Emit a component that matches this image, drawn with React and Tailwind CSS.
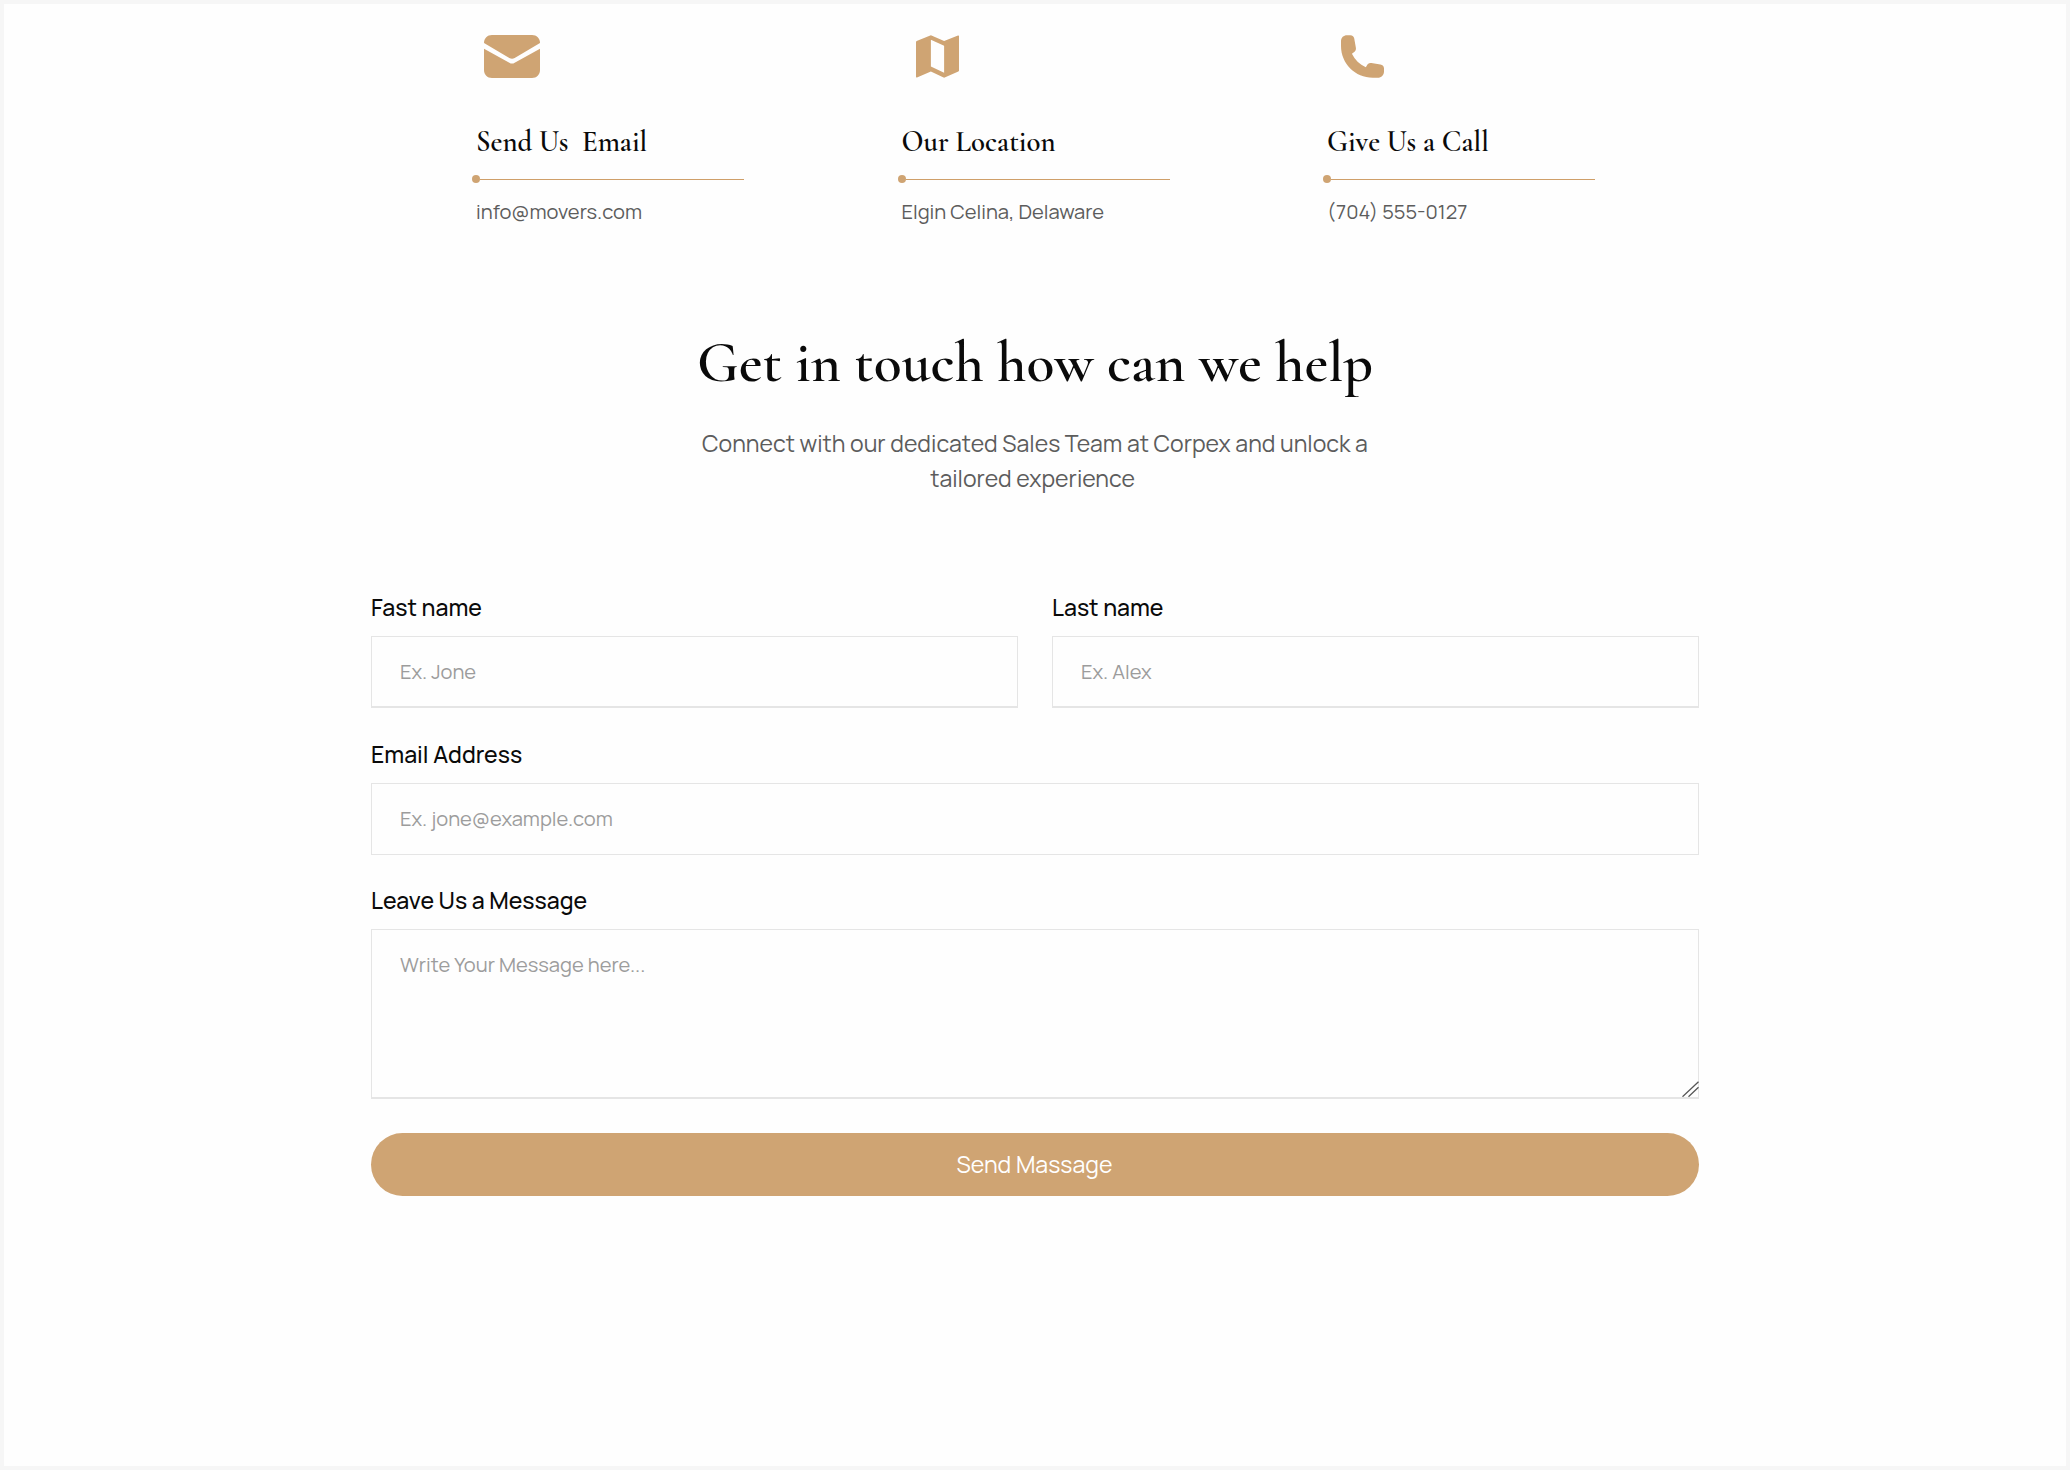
import React from 'react';

const MailIcon = () => (
  <svg viewBox="0 0 168 129" className="ml-3 h-[43px] w-14" fill="currentColor">
    <path d="M0 24C0 10 10 0 24 0H144C158 0 168 10 168 24L92 69Q84 73 76 69Z" />
    <path d="M0 41L76 83Q84 88 92 83L168 41V105C168 119 158 129 144 129H24C10 129 0 119 0 105Z" />
  </svg>
);

const MapIcon = () => (
  <svg viewBox="0 0 130 129" className="ml-[18px] h-[43px] w-[43px]" fill="currentColor" fillRule="evenodd">
    <path d="M2 18L45 0L85 18L127 1Q130 0 130 3V107Q130 109 128 110L85 129L45 110L3 128Q0 129 0 126V21Q0 19 2 18ZM45 14V95L85 114V32Z" />
  </svg>
);

const PhoneIcon = () => (
  <svg viewBox="0 0 130 129" className="ml-[18px] h-[43px] w-[43px]" fill="currentColor">
    <path d="M0 18C0 7 8 0 18 0H28C35 0 39 4 40 10L45 38C46 43 44 47 41 50L33 56C42 74 56 88 75 97L80 89C83 85 87 84 92 84L119 89C126 90 130 94 130 101V110C130 121 122 129 111 129H96C43 129 0 86 0 33Z" />
  </svg>
);

const contacts = [
  { icon: MailIcon, title: 'Send Us  Email', value: 'info@movers.com' },
  { icon: MapIcon, title: 'Our Location', value: 'Elgin Celina, Delaware' },
  { icon: PhoneIcon, title: 'Give Us a Call', value: '(704) 555-0127' },
];

const ContactCard = ({ icon: Icon, title, value }) => (
  <div>
    <div className="text-[#cfa473]">
      <Icon />
    </div>
    <h3 className="mt-[46px] pl-1 font-['Cormorant_Garamond','Liberation_Serif',serif] text-[28.8px] leading-9 font-semibold whitespace-pre text-[#0a0a0a]">
      {title}
    </h3>
    <div className="mt-[15px] flex w-[272px] items-center">
      <span className="size-2 rounded-full bg-[#cfa473]"></span>
      <span className="h-px flex-1 bg-[#cf9f69]"></span>
    </div>
    <p className="mt-[14px] pl-1 text-[20.15px] leading-[30px] text-[#5c5c5c]">{value}</p>
  </div>
);

const Field = ({ label, id, className, children }) => (
  <div className={className}>
    <label htmlFor={id} className="block text-[23.04px] leading-[30px] font-medium text-[#0a0a0a]">
      {label}
    </label>
    <div className="relative mt-[14px]">{children}</div>
  </div>
);

const inputClass =
  'block w-full resize-none border border-[#e5e5e5] bg-transparent px-7 text-[20.15px] outline-none placeholder:text-[#9c9c9c]';

const App = () => {
  return (
    <div className="h-[1470px] overflow-hidden border-4 border-[#f6f6f6] bg-[#fefefe] font-['Manrope','Inter',sans-serif]">
      <main className="mx-auto w-[1328px] pt-[31px]">
        <section className="grid grid-cols-3 gap-[49.5px] pl-[101px]">
          {contacts.map((item) => (
            <ContactCard key={item.title} {...item} />
          ))}
        </section>

        <section className="mt-[101px] text-center">
          <h2 className="font-['Cormorant_Garamond','Liberation_Serif',serif] text-[57.6px] leading-[70px] font-semibold text-[#0a0a0a]">
            Get in touch how can we help
          </h2>
          <p className="mt-7 text-[23.04px] leading-[34.6px] text-[#5c5c5c]">
            <span className="block">Connect with our dedicated Sales Team at Corpex and unlock a</span>
            <span className="block pr-[5px]">tailored experience</span>
          </p>
        </section>

        <form className="mt-[97px]" onSubmit={(e) => e.preventDefault()}>
          <div className="grid grid-cols-2 gap-[34px]">
            <Field label="Fast name" id="first">
              <input id="first" type="text" placeholder="Ex. Jone" className={`${inputClass} h-[72px] border-b-2`} />
            </Field>
            <Field label="Last name" id="last">
              <input id="last" type="text" placeholder="Ex. Alex" className={`${inputClass} h-[72px] border-b-2`} />
            </Field>
          </div>

          <Field label="Email Address" id="email" className="mt-[30.6px]">
            <input id="email" type="email" placeholder="Ex. jone@example.com" className={`${inputClass} h-[72px]`} />
          </Field>

          <Field label="Leave Us a Message" id="message" className="mt-[30.4px]">
            <textarea
              id="message"
              placeholder="Write Your Message here..."
              className={`${inputClass} h-[170px] border-b-2 pt-5 leading-[30px]`}
            ></textarea>
            {/* resize grip */}
            <svg viewBox="0 0 17 16" className="absolute right-0 bottom-[2px] h-4 w-[17px]" fill="none" stroke="#555" strokeWidth="1.3">
              <path d="M0.5 15.7L16.5 0.7M6.5 15.7L16.5 6.2" />
            </svg>
          </Field>

          <button type="submit" className="mt-[34px] h-[63px] w-full rounded-full bg-[#cfa473] pr-px text-[23.1px] text-white">
            Send Massage
          </button>
        </form>
      </main>
    </div>
  );
};

export default App;
